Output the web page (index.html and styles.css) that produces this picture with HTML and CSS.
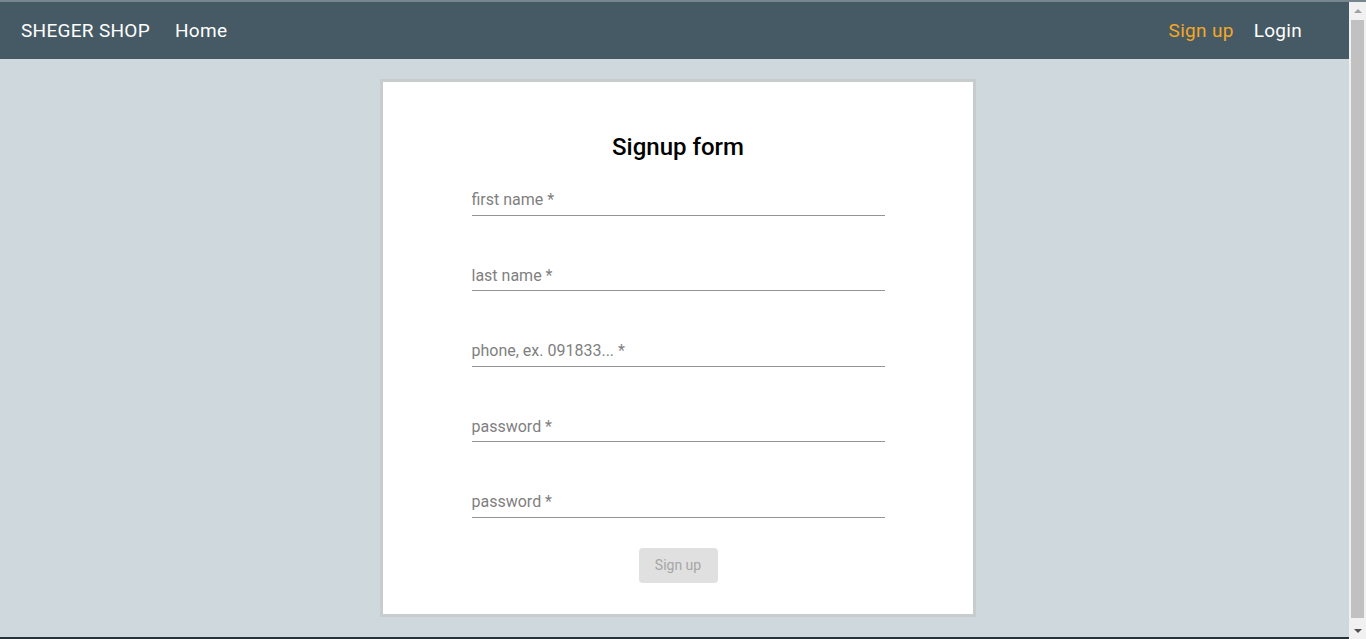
FILE: index.html
```html
<!DOCTYPE html>
<html lang="en">
<head>
<meta charset="utf-8">
<title>Sheger Shop - Sign up</title>
<link rel="stylesheet" href="styles.css">
</head>
<body>
<div class="page">
  <header class="topbar">
    <div class="nav-left">
      <a class="brand" href="#">SHEGER SHOP</a>
      <a class="nav-link" href="#">Home</a>
    </div>
    <div class="nav-right">
      <a class="nav-link active" href="#">Sign up</a>
      <a class="nav-link" href="#">Login</a>
    </div>
  </header>
  <main class="main">
    <form class="card">
      <h1 class="title">Signup form</h1>
      <div class="fields">
        <input class="field" type="text" placeholder="first name *">
        <input class="field" type="text" placeholder="last name *">
        <input class="field" type="text" placeholder="phone, ex. 091833... *">
        <input class="field" type="password" placeholder="password *">
        <input class="field" type="password" placeholder="password *">
      </div>
      <button class="btn" type="button" disabled>Sign up</button>
    </form>
  </main>
  <footer class="footer"></footer>
</div>
<div class="scrollbar" aria-hidden="true">
  <div class="sb-btn"><span class="arrow-up"></span></div>
  <div class="sb-thumb"></div>
  <div class="sb-btn"><span class="arrow-down"></span></div>
</div>
</body>
</html>
```

FILE: styles.css
```css
html, body {
  margin: 0;
  padding: 0;
}
body {
  background: #cfd8dc;
  font-family: Roboto, "Liberation Sans", Arial, sans-serif;
  border-top: 2px solid #76858e;
  display: grid;
  grid-template-columns: 1fr 17px;
  align-items: start;
}
.page {
  min-width: 0;
}
.scrollbar {
  position: sticky;
  top: 0;
  height: calc(100vh - 2px);
  background: #f1f1f1;
  display: flex;
  flex-direction: column;
}
.sb-btn {
  height: 17px;
  display: flex;
  align-items: center;
  justify-content: center;
}
.arrow-up {
  width: 0;
  height: 0;
  border-left: 4px solid transparent;
  border-right: 4px solid transparent;
  border-bottom: 4px solid #a3a3a3;
}
.arrow-down {
  width: 0;
  height: 0;
  border-left: 4px solid transparent;
  border-right: 4px solid transparent;
  border-top: 4px solid #505050;
}
.sb-thumb {
  flex: 1;
  margin: 1px 2px 4px;
  background: #c1c1c1;
}
.topbar {
  height: 57px;
  background: #465a65;
  display: flex;
  align-items: center;
  justify-content: space-between;
  padding: 0 47px 0 21px;
}
.nav-left, .nav-right {
  display: flex;
  align-items: center;
}
.nav-left { gap: 25px; }
.nav-right { gap: 20px; }
.brand, .nav-link {
  color: #ffffff;
  text-decoration: none;
  font-size: 19px;
  letter-spacing: 0.3px;
}
.nav-link.active {
  color: #f5a623;
}
.main {
  padding: 20px 0 20px 7px;
  display: flex;
  justify-content: center;
}
.card {
  width: 590px;
  background: #ffffff;
  border: 3px solid #c8cccd;
  padding: 51px 0 31px;
  display: flex;
  flex-direction: column;
  align-items: center;
}
.title {
  margin: 0 0 21.5px;
  font-size: 24px;
  line-height: 28px;
  font-weight: 500;
  color: #000;
}
.fields {
  display: flex;
  flex-direction: column;
  gap: 42.5px;
  width: 413px;
}
.field {
  box-sizing: border-box;
  width: 100%;
  height: 33px;
  border: none;
  border-bottom: 1px solid #949494;
  padding: 8px 0 6px;
  margin: 0;
  font-family: Roboto, "Liberation Sans", Arial, sans-serif;
  font-size: 16px;
  color: #222;
  background: transparent;
  outline: none;
}
.field::placeholder {
  color: #7f7f7f;
}
.btn {
  margin-top: 30px;
  width: 79px;
  height: 35px;
  border: none;
  border-radius: 4px;
  background: #e0e0e0;
  color: #a6a6a6;
  font-family: Roboto, "Liberation Sans", Arial, sans-serif;
  font-size: 14px;
  padding: 0;
}
.footer {
  height: 27px;
  background: #263238;
}
```
